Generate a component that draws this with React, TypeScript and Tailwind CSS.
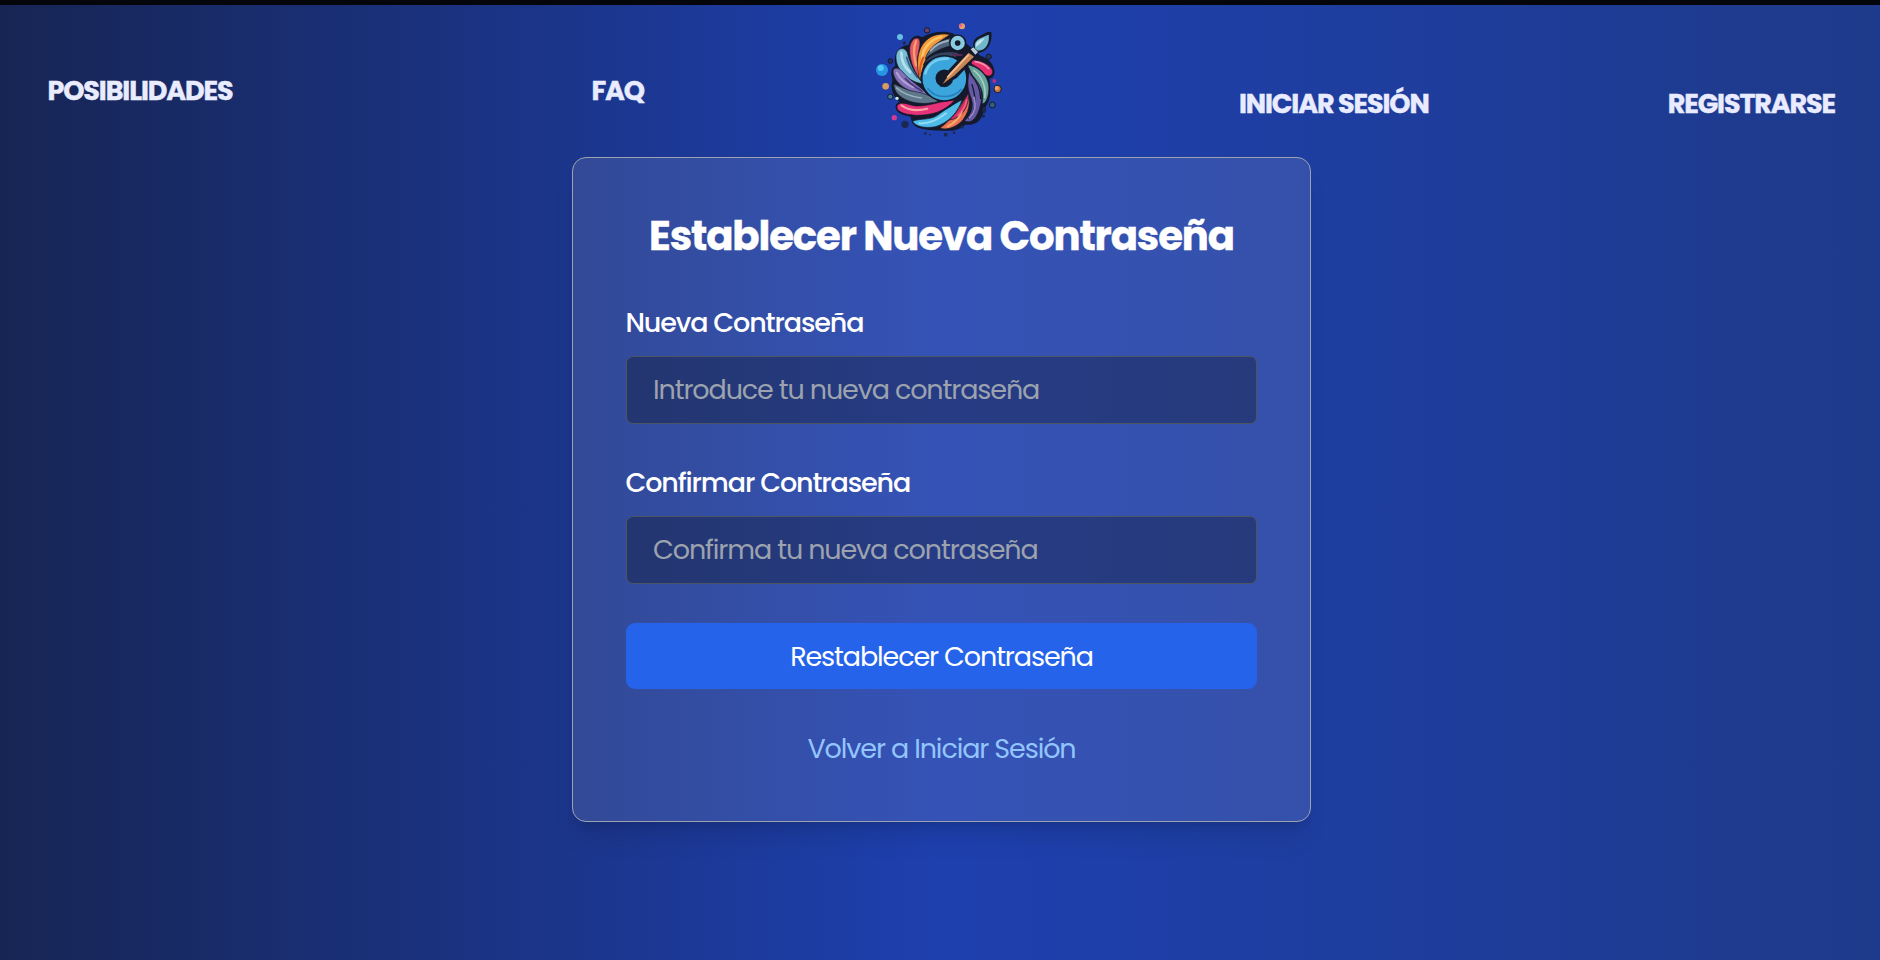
const INK = "#141a2c";

function Logo() {
  return (
    <svg viewBox="0 0 480 405" className="h-[135px] w-[160px]" aria-hidden="true">
      <path
        fill={INK}
        d="M262 66C230 64 205 70 186 82C172 72 152 78 146 104C128 106 106 116 104 150L106 168C94 172 90 190 98 210C92 226 94 246 106 262L118 276C104 280 104 296 114 306C126 316 142 318 152 320C154 340 164 352 186 356C214 362 240 362 262 362C286 364 304 354 316 344C340 346 358 338 366 318C374 302 376 290 382 282C394 262 392 232 388 206C402 204 408 188 400 170C394 154 378 142 362 138L310 92L278 70Z"
      />
      <g stroke={INK} strokeWidth="2" strokeLinejoin="round">
        <path fill="#e4566a" d="M149 116C150 94 166 76 178 88C184 104 174 124 172 150L178 204C160 180 148 146 149 116Z" />
        <path fill="#f4993a" d="M180 212C164 150 174 102 214 80C232 71 256 70 270 74C238 94 210 112 200 142C190 168 184 186 180 212Z" />
        <path fill="#4f6379" d="M196 146C206 114 232 92 272 84L280 106C252 112 224 122 196 146Z" />
        <path fill="#33435d" d="M190 164C204 136 240 118 296 128L288 142C250 134 214 142 190 164Z" />
        <path fill="#79bcd6" d="M108 140C108 116 132 106 142 128C150 160 162 190 190 222C146 216 106 178 108 140Z" />
        <path fill="#8270b6" d="M99 182C104 168 120 174 134 192C154 216 180 226 204 256C160 254 100 226 99 182Z" />
        <path fill="#5f778b" d="M101 222C120 228 140 242 166 245C190 249 216 258 236 274C176 292 102 270 101 222Z" />
        <path fill="#e63278" d="M112 286C122 272 142 284 168 288C206 290 240 272 284 271C252 306 214 316 172 316C142 316 104 306 112 286Z" />
        <path fill="#4fbdea" d="M158 334C180 324 206 332 232 316C262 294 280 284 306 269C296 308 262 340 226 350C196 356 166 350 158 334Z" />
        <path fill="#ec7350" d="M240 354C264 336 282 318 294 296L324 252C336 284 320 328 290 346C272 356 256 360 240 354Z" />
        <path fill="#d82f68" d="M268 330C292 306 304 288 326 248C328 290 306 326 268 330Z" />
        <path fill="#6658a5" d="M314 332C336 312 344 286 330 256C322 232 322 210 328 186C358 208 374 250 360 290C352 324 332 344 314 332Z" />
        <path fill="#69a39d" d="M366 280C374 250 362 222 338 198L322 164C364 172 392 206 386 246C384 264 376 284 366 280Z" />
        <path fill="#e62e70" d="M334 150C360 149 390 162 398 182C400 198 384 203 374 193C364 177 350 171 334 162Z" />
      </g>
      <g fill="none" strokeLinecap="round">
        <path stroke="#f7a065" strokeWidth="7" d="M168 94C160 112 160 136 168 166" />
        <path stroke="#fbc566" strokeWidth="7" d="M244 80C212 90 192 108 186 142" />
        <path stroke="#dc5b28" strokeWidth="6" d="M190 142C182 160 178 176 180 194" />
        <path stroke="#9fb2c4" strokeWidth="6" d="M264 92C240 98 228 104 212 122" />
        <path stroke="#b4e1ec" strokeWidth="8" d="M124 128C124 152 134 172 150 186" />
        <path stroke="#315b82" strokeWidth="5" d="M140 142C148 172 158 186 172 202" />
        <path stroke="#b3a0d5" strokeWidth="6" d="M110 188C124 214 142 224 160 232" />
        <path stroke="#463c7c" strokeWidth="5" d="M136 206C156 228 170 232 186 244" />
        <path stroke="#9bb3bf" strokeWidth="5" d="M110 234C132 254 154 260 184 264" />
        <path stroke="#f9a5a5" strokeWidth="6" d="M124 286C144 300 172 304 202 296" />
        <path stroke={INK} strokeWidth="4" d="M180 326C212 324 242 306 272 288" />
        <path stroke="#93daf2" strokeWidth="6" d="M178 340C212 342 238 326 258 310" />
        <path stroke="#f6b073" strokeWidth="5" d="M262 350C286 338 300 320 306 304" />
        <path stroke="#f26486" strokeWidth="5" d="M294 316C310 300 318 286 320 270" />
        <path stroke={INK} strokeWidth="4" d="M326 326C350 302 350 268 336 224" />
        <path stroke="#9b8bce" strokeWidth="5" d="M328 324C346 308 348 284 342 262" />
        <path stroke="#a4d0c2" strokeWidth="5" d="M374 262C380 230 364 198 342 182" />
        <path stroke={INK} strokeWidth="4" d="M362 266C362 232 350 212 332 192" />
        <path stroke="#f990ac" strokeWidth="5" d="M346 155C364 158 376 164 386 176" />
      </g>
      <path stroke="#582b54" strokeWidth="6" d="M276 134L314 136" />
      <circle cx="293" cy="99" r="16" fill="none" stroke={INK} strokeWidth="20" />
      <circle cx="293" cy="99" r="15" fill="none" stroke="#8acbe0" strokeWidth="13" />
      <circle cx="253" cy="205" r="48" fill="none" stroke={INK} strokeWidth="44" />
      <circle cx="253" cy="205" r="46" fill="none" stroke="#3ca5dc" strokeWidth="39" />
      <path fill="none" stroke="#75ccee" strokeWidth="8" strokeLinecap="round" d="M196 190C204 160 230 144 264 146" />
      <path fill="none" stroke="#2680c0" strokeWidth="5" strokeLinecap="round" d="M204 236C226 266 276 268 304 238" />
      <path fill={INK} d="M240 232L262 184L324 118L352 138L290 204Z" />
      <path fill="#c98552" d="M248 222L270 188L326 128L342 140L284 196Z" />
      <path fill="none" stroke="#f2c095" strokeWidth="5" d="M262 202L326 134" />
      <path fill={INK} d="M326 116L340 110C336 80 364 78 382 66L394 66C398 92 386 126 356 128L344 142Z" />
      <path fill="#b9ced6" d="M332 118L340 112L354 126L346 134Z" />
      <path fill="#72b8cd" d="M346 116C338 90 362 84 386 74C390 94 380 122 354 122Z" />
      <path fill="#c3e3ea" d="M348 110C346 94 358 90 374 84C368 96 358 104 348 110Z" />
      <g stroke={INK} strokeWidth="3">
        <circle cx="201" cy="61" r="8" fill="#6f3d70" />
        <circle cx="91" cy="153" r="7" fill="#26335e" />
        <circle cx="386" cy="140" r="8" fill="#28345a" />
        <circle cx="91" cy="260" r="8" fill="#407e98" />
        <circle cx="397" cy="285" r="9" fill="#315e7b" />
        <circle cx="413" cy="237" r="11" fill="#c97342" />
      </g>
      <circle cx="66" cy="180" r="18" fill="#2698e3" />
      <circle cx="62" cy="174" r="9" fill="#55c7f5" />
      <circle cx="120" cy="81" r="9" fill="#69bee4" />
      <circle cx="306" cy="49" r="9" fill="#ef9b72" />
      <circle cx="302" cy="46" r="4" fill="#e45c88" />
      <circle cx="77" cy="229" r="10" fill="#d99b63" />
      <circle cx="103" cy="323" r="8" fill="#d43b91" />
      <circle cx="403" cy="213" r="6" fill="#b5317d" />
      <circle cx="410" cy="234" r="6" fill="#f0a068" />
      <circle cx="111" cy="265" r="5" fill="#d0e8ee" />
      <g fill="#1a2950">
        <circle cx="135" cy="343" r="11" />
        <circle cx="133" cy="99" r="5" />
        <circle cx="370" cy="318" r="5" />
        <ellipse cx="373" cy="300" rx="6" ry="9" />
        <circle cx="196" cy="370" r="4" />
        <circle cx="210" cy="374" r="3" />
        <circle cx="257" cy="374" r="6" />
        <circle cx="282" cy="368" r="4" />
        <circle cx="306" cy="351" r="5" />
      </g>
    </svg>
  );
}

function NavLink({ children }: { children: string }) {
  return (
    <a href="#" className="block text-[27px] leading-[36px] font-bold text-[#e9ebff] [-webkit-text-stroke:0.4px_currentColor]">
      {children}
    </a>
  );
}

function PasswordField({ id, label, placeholder }: { id: string; label: string; placeholder: string }) {
  return (
    <div className="flex flex-col gap-[12.5px]">
      <label htmlFor={id} className="-ml-[0.5px] w-fit text-[27px] leading-[40.5px] font-medium">
        {label}
      </label>
      <input
        id={id}
        type="password"
        placeholder={placeholder}
        className="h-[68px] w-full rounded-[7px] border border-[#4b5563] bg-black/28 px-[26px] text-[27px] leading-[40px] placeholder:text-[#9ca3af] focus:outline-none"
      />
    </div>
  );
}

export default function App() {
  return (
    <div className="min-h-[960px] border-t-[5px] border-[#05060c] bg-[linear-gradient(to_right,#172554,#1e40af,#1e3a8a)] font-[Poppins,Inter,sans-serif] tracking-[-1.12px] text-white">
      <header className="grid h-[152px] grid-cols-[1fr_160px_1fr] px-[45px]">
        <nav className="flex items-start justify-between pt-[68px] pr-[216px] pl-[2.5px]">
          <NavLink>POSIBILIDADES</NavLink>
          <NavLink>FAQ</NavLink>
        </nav>
        <div className="pt-[5px]">
          <Logo />
        </div>
        <nav className="flex items-start justify-between pt-[81px] pl-[219px]">
          <NavLink>INICIAR SESIÓN</NavLink>
          <NavLink>REGISTRARSE</NavLink>
        </nav>
      </header>
      <main className="flex justify-center pl-[3px]">
        <section className="h-[665px] w-[739px] rounded-[14px] border border-[#9ca3af] bg-white/10 px-[53px] pt-[56px] shadow-xl">
          <h1 className="text-center text-[40.2px] leading-[45px] font-bold [-webkit-text-stroke:0.4px_currentColor]">
            Establecer Nueva Contraseña
          </h1>
          <form className="mt-[44px] flex flex-col gap-[39px]">
            <PasswordField id="password" label="Nueva Contraseña" placeholder="Introduce tu nueva contraseña" />
            <PasswordField id="confirm" label="Confirmar Contraseña" placeholder="Confirma tu nueva contraseña" />
            <button type="button" className="h-[66px] rounded-[9px] bg-[#2563eb] pt-[2px] text-[27px]">
              Restablecer Contraseña
            </button>
          </form>
          <div className="mt-[40px] text-center">
            <a href="#" className="text-[27px] leading-[40px] text-[#93c5fd]">
              Volver a Iniciar Sesión
            </a>
          </div>
        </section>
      </main>
    </div>
  );
}
